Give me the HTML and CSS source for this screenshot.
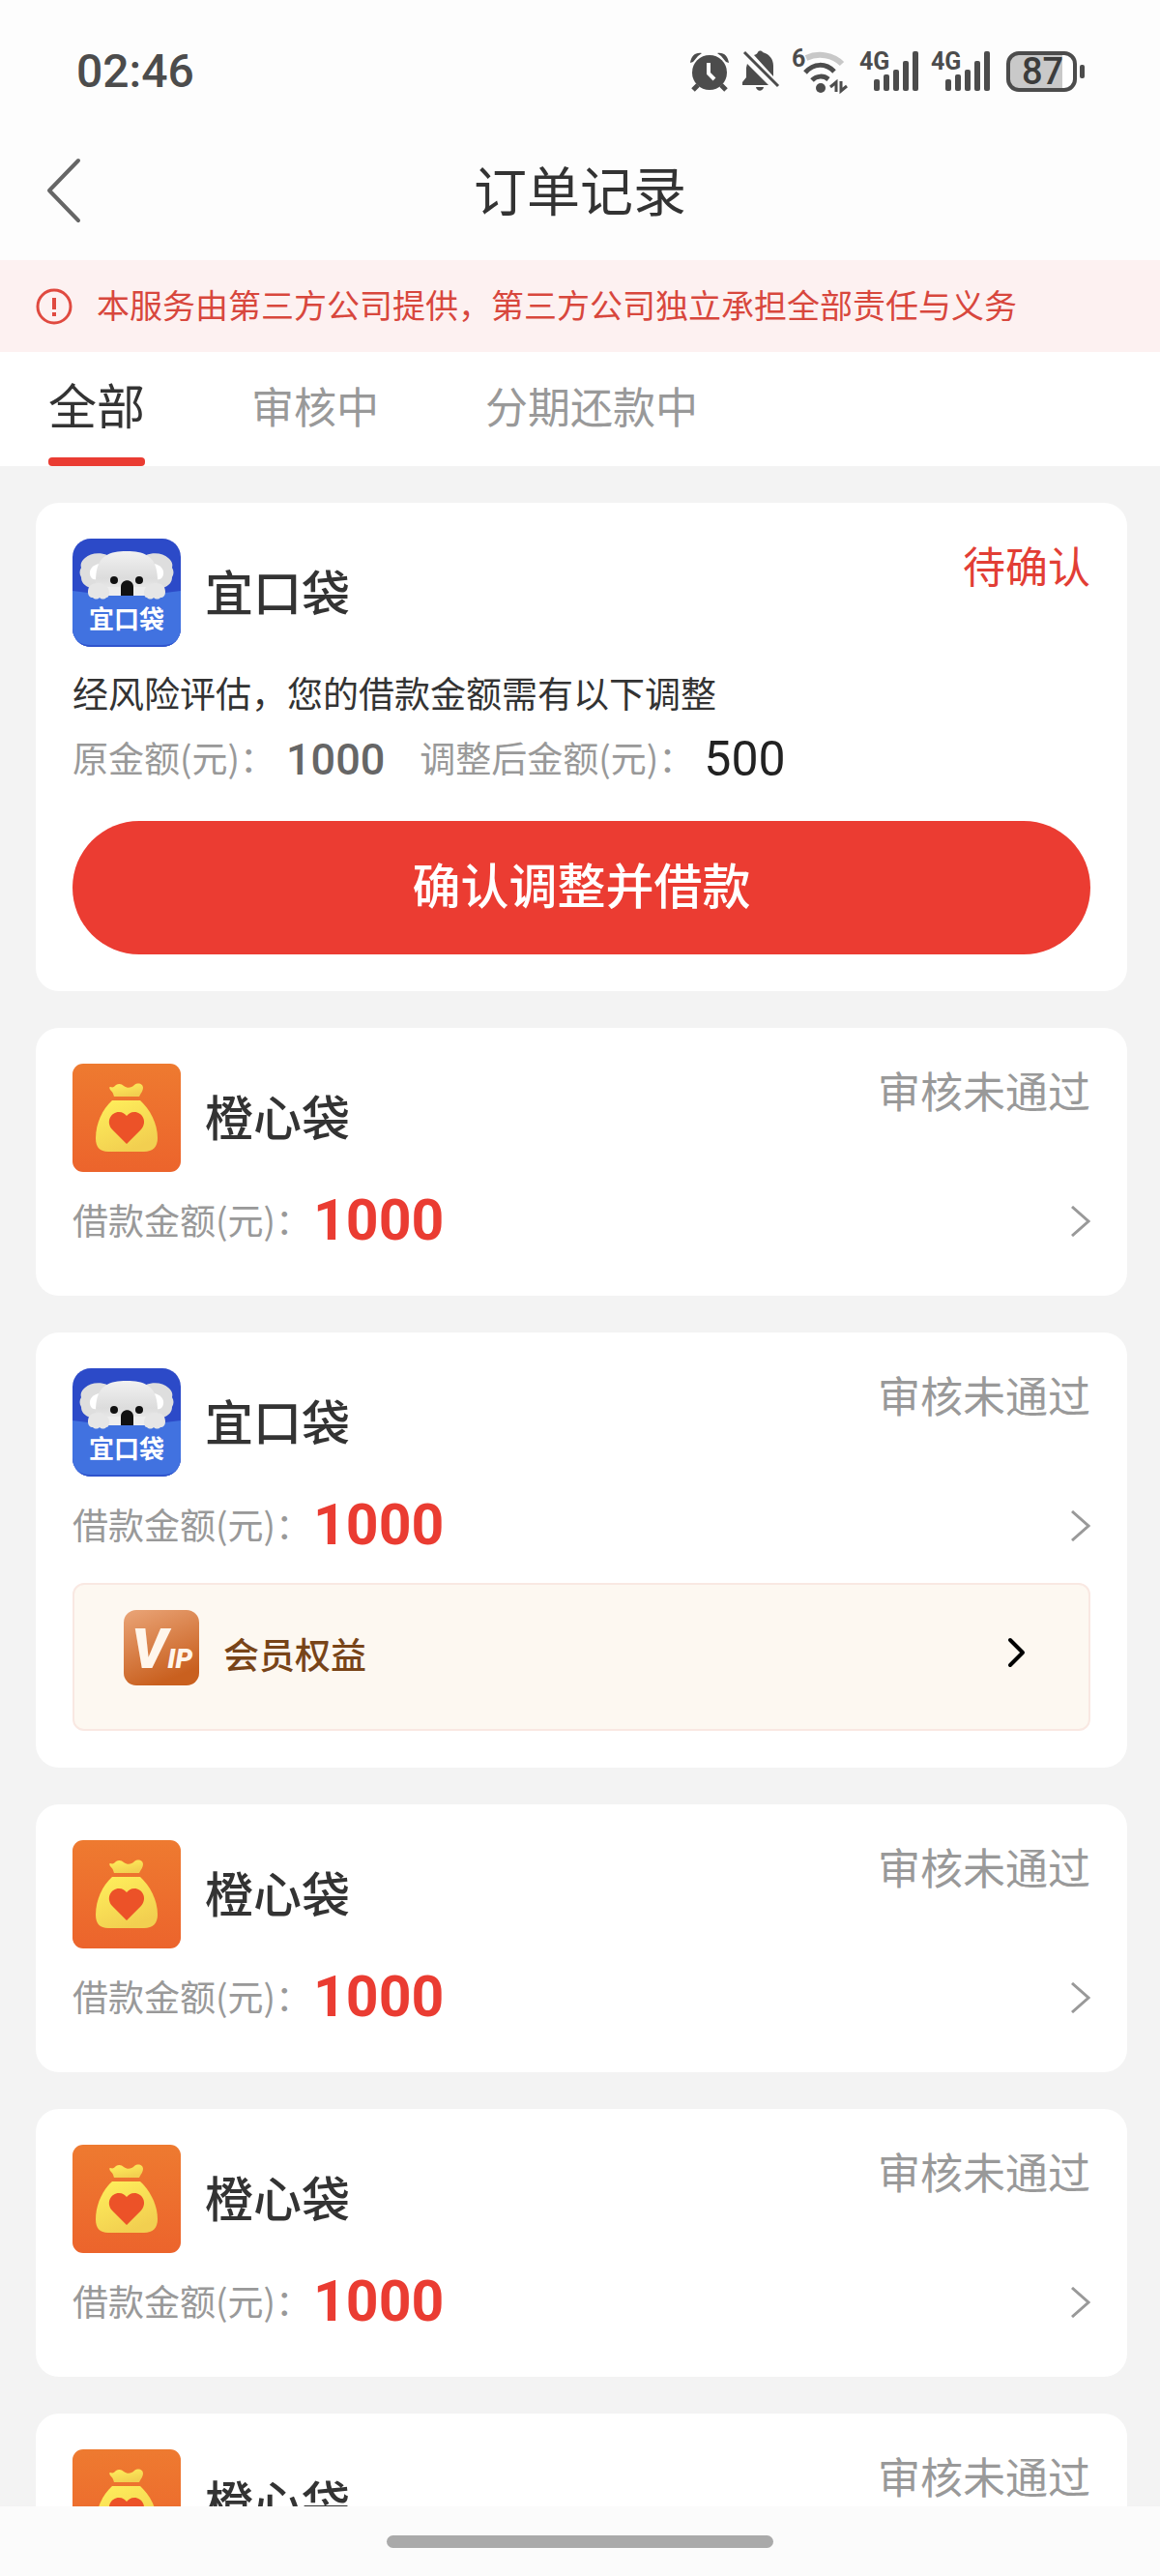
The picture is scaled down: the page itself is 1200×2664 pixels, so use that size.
FILE: index.html
```html
<!DOCTYPE html>
<html lang="zh-CN">

<head>
    <meta charset="UTF-8">
    <meta name="viewport" content="width=device-width, initial-scale=1">
    <title>订单记录</title>
    <link rel="stylesheet" href="styles.css">
</head>

<body>
    <!-- shared icons -->
    <svg class="defs" width="0" height="0" aria-hidden="true">
        <defs>
            <linearGradient id="koalaFur" x1="0" y1="0" x2="0" y2="1">
                <stop offset="0" stop-color="#f1f1f1"/>
                <stop offset="0.6" stop-color="#dcdcdc"/>
                <stop offset="1" stop-color="#f4f4f4"/>
            </linearGradient>
            <linearGradient id="orangeBg" x1="0" y1="0" x2="0" y2="1">
                <stop offset="0" stop-color="#ee7a30"/>
                <stop offset="1" stop-color="#ec642c"/>
            </linearGradient>
            <linearGradient id="bagGold" x1="0" y1="0" x2="0.5" y2="1">
                <stop offset="0" stop-color="#fff05c"/>
                <stop offset="1" stop-color="#f2cf50"/>
            </linearGradient>
            <linearGradient id="vipBg" x1="0" y1="0" x2="0.4" y2="1">
                <stop offset="0" stop-color="#eaa578"/>
                <stop offset="1" stop-color="#c9601f"/>
            </linearGradient>
            <clipPath id="koalaClip"><rect width="112" height="112" rx="19"/></clipPath>
        </defs>
        <symbol id="koala" viewBox="0 0 112 112">
            <g clip-path="url(#koalaClip)">
                <rect width="112" height="112" fill="#2c4ac8"/>
                <path d="M36 17c-8-3-18-2-23 3-4 3-5 7-4 10-2 3-2 7 0 10 0 5 3 8 7 10 5 3 12 3 17 1z" fill="#dedede"/>
                <path d="M76 17c8-3 18-2 23 3 4 3 5 7 4 10 2 3 2 7 0 10 0 5-3 8-7 10-5 3-12 3-17 1z" fill="#dedede"/>
                <path d="M28 26c-7 1-11 6-10 11 1 5 5 6 8 5z" fill="#fff"/>
                <path d="M84 26c7 1 11 6 10 11-1 5-5 6-8 5z" fill="#fff"/>
                <path d="M56 13c18 0 28 5 31 20 2 10 1 20-3 27H28c-4-7-5-17-3-27 3-15 13-20 31-20z" fill="url(#koalaFur)"/>
                <path d="M0 54q56 8 112 0v58H0z" fill="#4172e0"/>
                <path d="M0 94q1 16 19 16h74q18 0 19-16v18H0z" fill="#2f54cc"/>
                <path d="M36 50h40v9H36z" fill="#eee"/>
                <path d="M16 55c0-6 4-9 10-9s12 4 12 9c0 4-1 6-3 6-2 2-5 2-7 0-2 2-5 2-7 0-3 0-5-2-5-6z" fill="#e6e6e6"/>
                <path d="M96 55c0-6-4-9-10-9s-12 4-12 9c0 4 1 6 3 6 2 2 5 2 7 0 2 2 5 2 7 0 3 0 5-2 5-6z" fill="#e6e6e6"/>
                <circle cx="43" cy="43" r="4" fill="#111"/>
                <circle cx="69" cy="43" r="4" fill="#111"/>
                <path d="M50 59v-9c0-9 13-9 13 0v9z" fill="#111"/>
                <text class="koala-text" x="17" y="93">宜口袋</text>
            </g>
        </symbol>
        <symbol id="bag" viewBox="0 0 112 112">
            <rect width="112" height="112" rx="11" fill="url(#orangeBg)"/>
            <path d="M39 24c3 1 4 0 6-2 3-2 6-1 8 1 4 3 8 2 11-1 4-3 9-1 9 3 0 3-2 5-4 9H43c-1-4-2-5-4-7-1-2-1-3 0-3z" fill="url(#bagGold)"/>
            <path d="M41 38h29c10 9 18 24 18 39 0 9-5 14-14 14H37c-9 0-13-5-13-14 0-15 7-30 17-39z" fill="url(#bagGold)"/>
            <path d="M56 83 41 68c-7-8-1-18 7-18 4 0 6 2 8 4 2-2 4-4 8-4 8 0 14 10 7 18z" fill="#ec5228"/>
        </symbol>
        <symbol id="arrow" viewBox="0 0 20 32">
            <path d="M1 1l17 15L1 31" fill="none" stroke="#999" stroke-width="3"/>
        </symbol>
        <symbol id="bars" viewBox="0 0 62 42">
            <g fill="#4c4c4c">
                <rect x="15" y="29" width="6" height="12" rx="2"/>
                <rect x="25" y="24" width="6" height="17" rx="2"/>
                <rect x="35" y="19" width="6" height="22" rx="2"/>
                <rect x="45" y="10" width="6" height="31" rx="2"/>
                <rect x="55" y="0" width="6" height="41" rx="2"/>
            </g>
        </symbol>
    </svg>

    <div class="status-bar">
        <span class="time">02:46</span>
        <div class="status-icons">
            <svg class="alarm" width="42" height="42" viewBox="0 0 42 42" fill="#4c4c4c">
                <circle cx="21" cy="22" r="18"/>
                <path d="M9 35l-5 5M33 35l5 5" stroke="#4c4c4c" stroke-width="5"/>
                <path d="M1 12C2 5 6 1 13 2l-4 3-5 6zM41 12C40 5 36 1 29 2l4 3 5 6z"/>
                <path d="M20 12v11l6 6" fill="none" stroke="#fff" stroke-width="4"/>
            </svg>
            <svg class="bell" width="40" height="44" viewBox="0 0 40 44" fill="#4c4c4c">
                <path d="M6 14l22 22H1v-3l4-5V18zM13 5c2-1 3-1 4-3 1-2 4-2 5 0 7 2 11 7 11 14v11z"/>
                <path d="M15 38h8c-1 5-7 5-8 0z"/>
                <path d="M3 2l35 35" stroke="#4c4c4c" stroke-width="3"/>
            </svg>
            <svg class="wifi" width="58" height="44" viewBox="0 0 58 44" fill="none">
                <text class="net" x="0" y="17">6</text>
                <path d="M15 8c13-6 28-3 37 6" stroke="#c8c8c8" stroke-width="6"/>
                <path d="M14 23c9-10 21-10 30-1M21 31c5-5 12-5 17-1" stroke="#4c4c4c" stroke-width="5"/>
                <circle cx="30" cy="39" r="5" fill="#4c4c4c"/>
                <path d="M46 43V33l-6 5M51 32v10l6-5" stroke="#4c4c4c" stroke-width="3"/>
            </svg>
            <svg class="cell" width="62" height="42" viewBox="0 0 62 42"><use href="#bars" width="62" height="42"/><text class="net" x="0" y="19">4G</text></svg>
            <svg class="cell" width="62" height="42" viewBox="0 0 62 42"><use href="#bars" width="62" height="42"/><text class="net" x="0" y="19">4G</text></svg>
            <svg class="battery" width="82" height="42" viewBox="0 0 82 42">
                <rect x="2" y="2" width="69" height="38" rx="11" fill="#fff"/>
                <path d="M13 2h45v38H13Q2 40 2 29V13Q2 2 13 2z" fill="#c9c9c9"/>
                <rect x="2" y="2" width="69" height="38" rx="11" fill="none" stroke="#4c4c4c" stroke-width="4"/>
                <rect x="76" y="14" width="5" height="14" rx="2" fill="#4c4c4c"/>
                <text class="charge" x="16" y="34">87</text>
            </svg>
        </div>
    </div>

    <header class="header">
        <button class="back" aria-label="返回">
            <svg width="36" height="66" viewBox="0 0 36 66"><path d="M33 2L3 33l30 31" fill="none" stroke="#666" stroke-width="4" stroke-linecap="round" stroke-linejoin="round"/></svg>
        </button>
        <h1>订单记录</h1>
    </header>

    <div class="notice">
        <svg width="38" height="38" viewBox="0 0 38 38" fill="none" stroke="#e04a40">
            <circle cx="19" cy="19" r="17" stroke-width="3"/>
            <path d="M19 10v12M19 25v4" stroke-width="4"/>
        </svg>
        <p>本服务由第三方公司提供，第三方公司独立承担全部责任与义务</p>
    </div>

    <nav class="tabs">
        <button class="tab active">全部</button>
        <button class="tab">审核中</button>
        <button class="tab">分期还款中</button>
    </nav>

    <main class="list">
        <section class="card">
            <div class="card-head">
                <svg class="logo"><use href="#koala"/></svg>
                <h2>宜口袋</h2>
                <span class="state pending">待确认</span>
            </div>
            <p class="desc">经风险评估，您的借款金额需有以下调整</p>
            <div class="adjust">
                <span class="label">原金额(元)：</span>
                <span class="old">1000</span>
                <span class="label">调整后金额(元)：</span>
                <span class="new">500</span>
            </div>
            <button class="confirm">确认调整并借款</button>
        </section>

        <section class="card">
            <div class="card-head">
                <svg class="logo"><use href="#bag"/></svg>
                <h2>橙心袋</h2>
                <span class="state">审核未通过</span>
            </div>
            <a class="amount" href="#">
                <span class="label">借款金额(元)：</span>
                <span class="money">1000</span>
                <svg class="arrow"><use href="#arrow"/></svg>
            </a>
        </section>

        <section class="card">
            <div class="card-head">
                <svg class="logo"><use href="#koala"/></svg>
                <h2>宜口袋</h2>
                <span class="state">审核未通过</span>
            </div>
            <a class="amount" href="#">
                <span class="label">借款金额(元)：</span>
                <span class="money">1000</span>
                <svg class="arrow"><use href="#arrow"/></svg>
            </a>
            <a class="vip" href="#">
                <svg class="vip-icon" viewBox="0 0 78 78">
                    <rect width="78" height="78" rx="13" fill="url(#vipBg)"/>
                    <text class="vip-text" x="8" y="60">V<tspan class="vip-small">IP</tspan></text>
                </svg>
                <span class="vip-name">会员权益</span>
                <svg class="vip-arrow" viewBox="0 0 20 32"><path d="M3 3l13 13L3 29" fill="none" stroke="#000" stroke-width="4" stroke-linecap="round" stroke-linejoin="round"/></svg>
            </a>
        </section>

        <section class="card">
            <div class="card-head">
                <svg class="logo"><use href="#bag"/></svg>
                <h2>橙心袋</h2>
                <span class="state">审核未通过</span>
            </div>
            <a class="amount" href="#">
                <span class="label">借款金额(元)：</span>
                <span class="money">1000</span>
                <svg class="arrow"><use href="#arrow"/></svg>
            </a>
        </section>

        <section class="card">
            <div class="card-head">
                <svg class="logo"><use href="#bag"/></svg>
                <h2>橙心袋</h2>
                <span class="state">审核未通过</span>
            </div>
            <a class="amount" href="#">
                <span class="label">借款金额(元)：</span>
                <span class="money">1000</span>
                <svg class="arrow"><use href="#arrow"/></svg>
            </a>
        </section>

        <section class="card">
            <div class="card-head">
                <svg class="logo"><use href="#bag"/></svg>
                <h2>橙心袋</h2>
                <span class="state">审核未通过</span>
            </div>
        </section>
    </main>

    <footer class="home-bar"><div class="home-pill"></div></footer>
</body>

</html>
```

FILE: styles.css
```css
* {
    box-sizing: border-box;
}

body {
    margin: 0;
    height: 100vh;
    display: flex;
    flex-direction: column;
    background: #fdfdfd;
    color: #333;
    font-family: "Noto Sans CJK SC", sans-serif;
}

h1, h2, p {
    margin: 0;
    font-weight: 400;
}

button {
    padding: 0;
    border: none;
    background: none;
    color: inherit;
    font-family: inherit;
}

a {
    color: inherit;
    text-decoration: none;
}

svg {
    display: block;
    flex: none;
    overflow: visible;
}

.defs {
    position: absolute;
}

/* phone status bar */
.status-bar {
    display: flex;
    justify-content: space-between;
    align-items: center;
    height: 124px;
    padding: 24px 77px 0 79px;
    flex: none;
}

.time {
    font: 500 48px/60px Roboto, sans-serif;
    color: #4c4c4c;
}

.status-icons {
    display: flex;
    align-items: center;
    gap: 12px;
}

.battery {
    margin-left: 4px;
}

.net {
    font: 700 25px Roboto, sans-serif;
    fill: #4c4c4c;
}

.charge {
    font: 500 38px Roboto, sans-serif;
    fill: #3c3c3c;
}

/* title */
.header {
    display: grid;
    grid-template-columns: 1fr auto 1fr;
    align-items: center;
    height: 145px;
    padding: 0 48px;
    flex: none;
}

.back {
    justify-self: start;
}

.header h1 {
    padding-bottom: 6px;
    font-size: 55px;
    line-height: 78px;
}

.notice {
    display: flex;
    align-items: center;
    gap: 25px;
    height: 95px;
    padding: 0 37px;
    background: #fdf1f1;
    color: #d8473d;
    flex: none;
}

.notice p {
    padding-bottom: 4px;
    font-size: 34px;
    line-height: 60px;
}

.tabs {
    display: flex;
    gap: 110px;
    height: 118px;
    padding: 0 50px;
    background: #fff;
    flex: none;
}

.tab {
    font-size: 44px;
    color: #999;
    border-bottom: 9px solid transparent;
}

.tab.active {
    position: relative;
    padding-bottom: 4px;
    font-size: 50px;
    color: #333;
}

.tab.active::after {
    content: "";
    position: absolute;
    left: 0;
    right: 0;
    bottom: -9px;
    height: 9px;
    border-radius: 4px;
    background: #ea3c32;
}

/* orders */
.list {
    flex: 1;
    min-height: 0;
    display: flex;
    flex-direction: column;
    gap: 38px;
    padding: 38px 34px 0 37px;
    background: #f3f3f3;
    overflow-y: auto;
    scrollbar-width: none;
}

.card {
    flex: none;
    padding: 37px 38px 38px;
    border-radius: 24px;
    background: #fff;
}

.card-head {
    display: flex;
    align-items: center;
}

.logo {
    width: 112px;
    height: 112px;
}

.koala-text {
    font: 700 26px "Noto Sans CJK SC", sans-serif;
    fill: #fff;
}

.card-head h2 {
    margin-left: 25px;
    padding-bottom: 6px;
    font-size: 50px;
    font-weight: 500;
    line-height: 78px;
}

.state {
    margin-left: auto;
    align-self: flex-start;
    font-size: 44px;
    line-height: 54px;
    color: #999;
}

.state.pending {
    color: #e23e35;
}

.desc {
    margin-top: 17px;
    font-size: 37px;
    line-height: 60px;
}

.adjust, .amount {
    display: flex;
    align-items: center;
    height: 78px;
    font-size: 37px;
}

.label {
    padding-bottom: 4px;
    color: #999;
}

.old, .new, .money {
    font-family: Roboto, sans-serif;
}

.old {
    margin: 0 36px 0 11px;
    font-size: 45px;
    font-weight: 500;
    color: #666;
}

.new {
    margin-left: 10px;
    font-size: 50px;
    color: #222;
}

.confirm {
    display: block;
    width: 100%;
    height: 138px;
    margin-top: 25px;
    padding-bottom: 10px;
    border-radius: 69px;
    background: #eb3c32;
    color: #fff;
    font-size: 50px;
    font-weight: 500;
}

.amount {
    margin-top: 12px;
}

.money {
    margin-left: 2px;
    padding-bottom: 4px;
    font-size: 59px;
    font-weight: 700;
    color: #ea3c32;
}

.arrow {
    width: 20px;
    height: 32px;
    margin-left: auto;
}

.vip {
    display: flex;
    align-items: center;
    height: 153px;
    margin-top: 20px;
    padding: 0 64px 0 51px;
    border: 2px solid #f9e8e2;
    border-radius: 12px;
    background: #fdf8f1;
    font-size: 37px;
    color: #784418;
}

.vip-icon {
    width: 78px;
    height: 78px;
    margin: 0 25px 20px 0;
}

.vip-name {
    padding-bottom: 8px;
    font-weight: 500;
}

.vip-text {
    font: italic 900 58px Roboto, sans-serif;
    fill: #fff6ec;
}

.vip-small {
    font-size: 28px;
}

.vip-arrow {
    width: 20px;
    height: 32px;
    margin: 0 0 10px auto;
}

.home-bar {
    display: flex;
    justify-content: center;
    align-items: center;
    height: 72px;
    background: #fbfbfb;
    flex: none;
}

.home-pill {
    width: 400px;
    height: 13px;
    border-radius: 7px;
    background: #aaa;
}
```
